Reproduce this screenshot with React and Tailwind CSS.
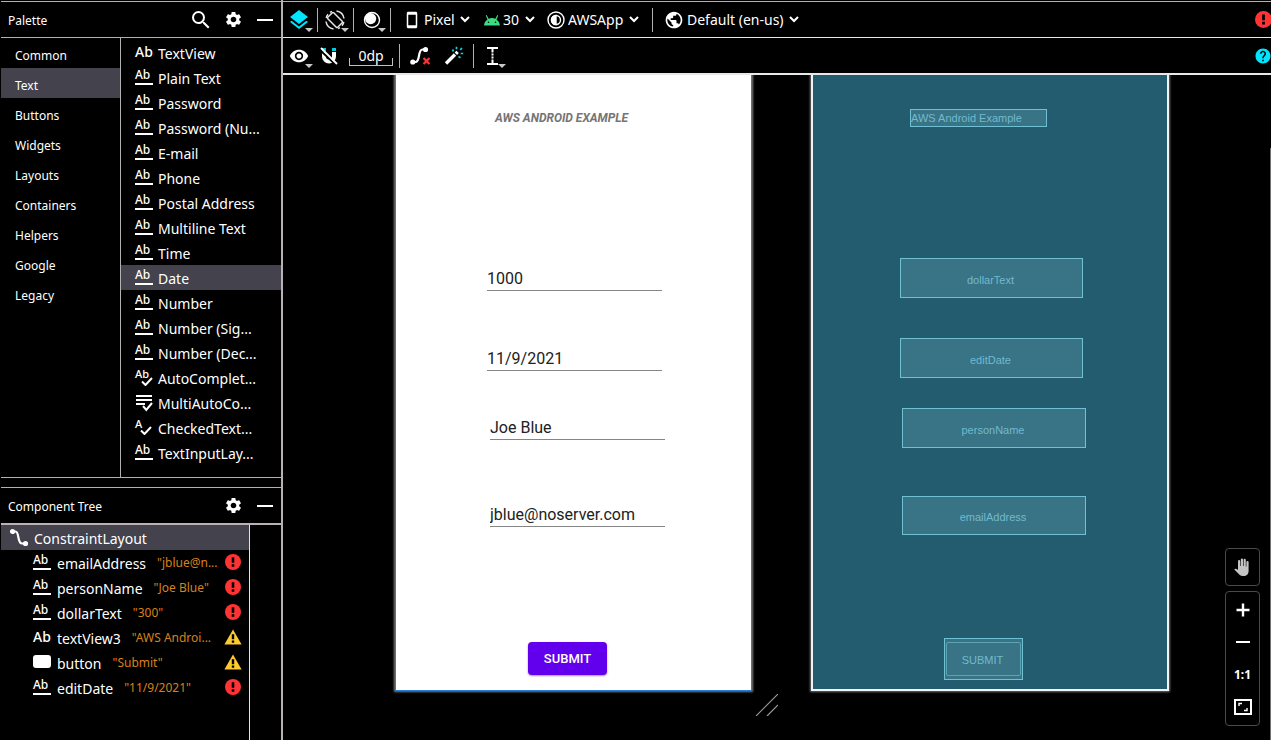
import React from "react";
import {
  MdSearch,
  MdSettings,
  MdLayers,
  MdVisibility,
  MdPublic,
  MdHelp,
  MdStayCurrentPortrait,
} from "react-icons/md";

const categories = [
  "Common",
  "Text",
  "Buttons",
  "Widgets",
  "Layouts",
  "Containers",
  "Helpers",
  "Google",
  "Legacy",
];

const widgets = [
  { name: "TextView", icon: "plain" },
  { name: "Plain Text", icon: "field" },
  { name: "Password", icon: "field" },
  { name: "Password (Nu...", icon: "field" },
  { name: "E-mail", icon: "field" },
  { name: "Phone", icon: "field" },
  { name: "Postal Address", icon: "field" },
  { name: "Multiline Text", icon: "field" },
  { name: "Time", icon: "field" },
  { name: "Date", icon: "field" },
  { name: "Number", icon: "field" },
  { name: "Number (Sig...", icon: "field" },
  { name: "Number (Dec...", icon: "field" },
  { name: "AutoComplet...", icon: "auto" },
  { name: "MultiAutoCo...", icon: "multi" },
  { name: "CheckedText...", icon: "checked" },
  { name: "TextInputLay...", icon: "field" },
];

const tree = [
  { name: "emailAddress", value: '"jblue@n...', icon: "field", level: "error" },
  { name: "personName", value: '"Joe Blue"', icon: "field", level: "error" },
  { name: "dollarText", value: '"300"', icon: "field", level: "error" },
  { name: "textView3", value: '"AWS Androi...', icon: "plain", level: "warning" },
  { name: "button", value: '"Submit"', icon: "button", level: "warning" },
  { name: "editDate", value: '"11/9/2021"', icon: "field", level: "error" },
];

function WidgetIcon({ type }) {
  if (type === "plain") {
    return <span className="flex h-5 w-[18px] items-start text-[14px] leading-[18px] font-medium">Ab</span>;
  }
  if (type === "field") {
    return (
      <span className="flex h-5 w-[18px] flex-col">
        <span className="h-[15px] text-[12px] leading-[14px] font-medium">Ab</span>
        <span className="h-0.5 w-full bg-white" />
      </span>
    );
  }
  if (type === "button") {
    return (
      <span className="flex h-5 w-[18px] items-start pt-0.5">
        <span className="h-[13px] w-full rounded-[3px] bg-white" />
      </span>
    );
  }
  if (type === "multi") {
    return (
      <svg viewBox="0 0 18 20" className="h-5 w-[18px]" fill="none" stroke="white" strokeWidth="2">
        <path d="M1 3h16M1 7h16M1 11h9M8 13l3.300 4L17 10" />
      </svg>
    );
  }
  return (
    <span className="relative flex h-5 w-[18px]">
      <span className="text-[11px] leading-3 font-medium">{type === "auto" ? "Ab" : "A"}</span>
      <svg
        viewBox="0 0 12 9"
        className={type === "auto" ? "absolute right-0 bottom-0.5 h-[9px] w-3" : "absolute right-px bottom-[3px] h-[9px] w-3"}
        fill="none"
        stroke="currentColor"
        strokeWidth="2"
      >
        <path d="M1 4.500L4.500 8 11 1" />
      </svg>
    </span>
  );
}

function ErrorIcon({ className }) {
  return (
    <svg viewBox="0 0 16 16" className={className}>
      <circle cx="8" cy="8" r="8" fill="#ff3333" />
      <path d="M6.700 3.300h2.600v5.400H6.700zM6.700 10.200h2.600v2.600H6.700z" fill="black" />
    </svg>
  );
}

function WarningIcon({ className }) {
  return (
    <svg viewBox="0 0 18 16" className={className}>
      <path d="M9 .5l8.600 15H.4z" fill="#fdcb2e" />
      <path d="M7.800 5.300h2.400v5H7.800zM7.800 11.500h2.400v2.300H7.800z" fill="black" />
    </svg>
  );
}

function Separator() {
  return <span className="h-6 w-px shrink-0 bg-[#b4b0b0]" />;
}

function IconButton({ label, caret, className = "", children }) {
  return (
    <button type="button" aria-label={label} className={`relative flex size-5 shrink-0 items-center justify-center ${className}`}>
      {children}
      {caret && (
        <svg viewBox="0 0 8 4" className="absolute -right-1 -bottom-0.5 h-1 w-2" fill="#c8c8c8">
          <path d="M0 0h8L4 4z" />
        </svg>
      )}
    </button>
  );
}

function Picker({ label, value, className = "", children }) {
  return (
    <label className={`flex shrink-0 items-center gap-[3px] ${className}`}>
      {children}
      <select aria-label={label} className="appearance-none bg-transparent p-0 text-[14px] leading-5 text-white">
        <option>{value}</option>
      </select>
      <svg viewBox="0 0 10 7" className="ml-0.5 h-[7px] w-2.5" fill="none" stroke="white" strokeWidth="2">
        <path d="M1 1l4 4 4-4" />
      </svg>
    </label>
  );
}

function PanelHeader({ title, search }) {
  return (
    <header className="flex h-[35px] items-center pr-1.5 pl-[7px]">
      <h2 className="flex-1 pt-0.5 text-[12px] leading-4">{title}</h2>
      <div className="flex items-center gap-3">
        {search && (
          <IconButton label="Search">
            <MdSearch className="size-6 shrink-0" />
          </IconButton>
        )}
        <IconButton label={`${title} settings`}>
          <MdSettings className="size-[19px] shrink-0" />
        </IconButton>
        <IconButton label={`Hide ${title}`}>
          <span className="h-0.5 w-4 bg-white" />
        </IconButton>
      </div>
    </header>
  );
}

function Sidebar() {
  return (
    <aside className="flex w-[283px] shrink-0 flex-col border-r-2 border-[#b8b2b5] pl-px">
      <section className="mt-px border-y border-[#b4b0b0]">
        <PanelHeader title="Palette" search />
        <div className="flex border-t border-[#b4b0b0]">
          <ul className="w-[120px] shrink-0 border-r border-[#b4b0b0]">
            {categories.map((name) => (
              <li key={name}>
                <button
                  type="button"
                  className={`flex h-[30px] w-full items-center pt-1.5 pl-3.5 text-[12px] leading-4 ${name === "Text" ? "bg-[#43424d]" : ""}`}
                >
                  {name}
                </button>
              </li>
            ))}
          </ul>
          <ul className="min-w-0 flex-1 pt-0.5 pb-3">
            {widgets.map((item) => (
              <li key={item.name}>
                <button
                  type="button"
                  className={`flex h-[25px] w-full items-center gap-[5px] pl-3.5 text-left text-[14px] leading-5 whitespace-nowrap ${item.name === "Date" ? "bg-[#43424d]" : ""}`}
                >
                  <WidgetIcon type={item.icon} />
                  <span className="pt-0.5">{item.name}</span>
                </button>
              </li>
            ))}
          </ul>
        </div>
      </section>

      <section className="mt-[9px] flex flex-1 flex-col border-t border-[#b4b0b0]">
        <PanelHeader title="Component Tree" />
        <div className="flex-1 border-t-2 border-[#b8b2b5] pr-[31px]">
          <ul className="h-full border-r border-[#e4e4e4]">
            <li>
              <button type="button" className="flex h-[25px] w-full items-center gap-[5px] bg-[#43424d] pl-2 text-[14px] leading-5">
                <svg viewBox="0 0 20 20" className="size-5" fill="none" stroke="white" strokeWidth="2.200">
                  <path d="M4 3.500h2.500C10.500 3.500 8 15.500 13 15.500h3" />
                  <circle cx="3.500" cy="3.500" r="1.500" fill="white" />
                  <circle cx="16.500" cy="15.500" r="1.500" fill="white" />
                </svg>
                <span className="pt-0.5">ConstraintLayout</span>
              </button>
            </li>
            {tree.map((node) => (
              <li key={node.name}>
                <button type="button" className="flex h-[25px] w-full items-center pr-[7px] pl-8 text-left whitespace-nowrap">
                  <WidgetIcon type={node.icon} />
                  <span className="pt-0.5 pl-1.5 text-[14px] leading-5">{node.name}</span>
                  <span className="flex-1 pl-[11px] text-[12px] leading-4 text-[#d6811c]">{node.value}</span>
                  <span className="flex w-[18px] shrink-0 justify-center pb-0.5">
                    {node.level === "error" ? <ErrorIcon className="size-4" /> : <WarningIcon className="h-4 w-[18px]" />}
                  </span>
                </button>
              </li>
            ))}
          </ul>
        </div>
      </section>
    </aside>
  );
}

function DeviceBar() {
  return (
    <div className="flex h-9 items-center border-t border-[#b4b0b0] pl-1.5">
      <IconButton label="Design surface" caret>
        <MdLayers className="size-6 shrink-0 text-[#00e5ff]" />
      </IconButton>
      <span className="ml-2 flex">
        <Separator />
      </span>
      <IconButton label="Orientation" caret className="ml-[7px]">
        <svg viewBox="0 0 20 20" className="size-5 shrink-0" fill="none" stroke="#e6e6e6" strokeWidth="1.500">
          <rect x="5.800" y="3" width="8.400" height="14" rx="1" transform="rotate(-45 10 10)" />
          <path d="M11.500 1a9 9 0 0 1 7.500 7.500M8.500 19A9 9 0 0 1 1 11.500" />
          <path d="M1.200 8A9 9 0 0 1 3 4.200M5 2.400a9 9 0 0 1 2-1M18.800 12a9 9 0 0 1-1.800 3.800M15 17.600a9 9 0 0 1-2 1" />
        </svg>
      </IconButton>
      <span className="ml-2 flex">
        <Separator />
      </span>
      <IconButton label="Night mode" caret className="ml-2">
        <svg viewBox="0 0 20 20" className="size-5">
          <circle cx="10" cy="10" r="7.500" fill="none" stroke="white" strokeWidth="1.400" />
          <circle cx="8.600" cy="8.600" r="5.600" fill="white" />
        </svg>
      </IconButton>
      <span className="ml-2 flex">
        <Separator />
      </span>
      <Picker label="Device" value="Pixel" className="ml-3">
        <MdStayCurrentPortrait className="size-[18px]" />
      </Picker>
      <Picker label="API version" value="30" className="ml-3.5">
        <svg viewBox="0 0 16 12" className="h-3 w-4" fill="#3ddc84">
          <path d="M0 11.500a8 8 0 0 1 3.500-6L1.800 1.600l.9-.5 1.900 3.700a9 9 0 0 1 6.800 0l1.900-3.700.9.5-1.700 3.900a8 8 0 0 1 3.500 6z" />
          <circle cx="4.500" cy="8.300" r=".8" fill="black" />
          <circle cx="11.500" cy="8.300" r=".8" fill="black" />
        </svg>
      </Picker>
      <Picker label="Theme" value="AWSApp" className="ml-3">
        <svg viewBox="0 0 18 18" className="size-[18px]" fill="none" stroke="white" strokeWidth="1.400">
          <circle cx="9" cy="9" r="8" />
          <circle cx="9" cy="9" r="4.500" />
          <path d="M9 4.500a4.500 4.500 0 0 0 0 9z" fill="white" />
        </svg>
      </Picker>
      <span className="ml-[13px] flex">
        <Separator />
      </span>
      <Picker label="Locale" value="Default (en-us)" className="ml-[11px]">
        <MdPublic className="size-5" />
      </Picker>
      <IconButton label="Show errors" className="-mr-0.5 ml-auto">
        <ErrorIcon className="size-[17px] shrink-0" />
      </IconButton>
    </div>
  );
}

function DesignBar() {
  return (
    <div className="flex h-[38px] items-center border-t border-b-2 border-[#e8e8e8] pl-1.5">
      <IconButton label="View options" caret>
        <MdVisibility className="size-5 shrink-0" />
      </IconButton>
      <IconButton label="Autoconnect" className="ml-2.5">
        <svg viewBox="0 0 20 20" className="size-5 shrink-0" fill="none" strokeWidth="4">
          <path d="M5 6v4.500a5 5 0 0 0 10 0V6" stroke="white" />
          <path d="M5 2v3M15 2v3" stroke="#00c8e0" />
          <path d="M1 4l17 16" stroke="black" strokeWidth="2" />
          <path d="M2 2l16 16" stroke="white" strokeWidth="1.800" />
        </svg>
      </IconButton>
      <button type="button" aria-label="Default margin 0dp" className="relative ml-2.5 flex h-5 w-11 items-center justify-center text-[14px] leading-5">
        0dp
        <span className="absolute inset-x-0 bottom-0 h-2 border-x border-b border-[#c0c0c0]" />
      </button>
      <span className="ml-1.5 flex">
        <Separator />
      </span>
      <IconButton label="Clear constraints" className="ml-2.5">
        <svg viewBox="0 0 20 20" className="size-5 shrink-0" fill="none" stroke="white" strokeWidth="2.200">
          <path d="M3 16h2.500c5 0 2-12.500 7-12.500h3" />
          <circle cx="2.800" cy="16" r="1.500" fill="white" />
          <circle cx="15.500" cy="3.500" r="1.500" fill="white" />
          <path d="M13.500 12l6 6M19.500 12l-6 6" stroke="#ff3333" />
        </svg>
      </IconButton>
      <IconButton label="Infer constraints" className="ml-3.5">
        <svg viewBox="0 0 20 20" className="size-5 shrink-0" fill="none">
          <path d="M2 17.500l9-9" stroke="white" strokeWidth="3.400" />
          <path d="M11.800 7.700l1.800-1.800" stroke="white" strokeWidth="3.400" />
          <path d="M8.500 3.500l1 2M12.500.8v2.500M18 2l-1.800 1.800M16.700 7.500h2.500M14.500 10.500l2 1.200" stroke="#19cbe0" strokeWidth="1.700" />
        </svg>
      </IconButton>
      <span className="ml-[9px] flex">
        <Separator />
      </span>
      <IconButton label="Guidelines" caret className="ml-2">
        <svg viewBox="0 0 20 20" className="size-5 shrink-0" fill="none" stroke="white" strokeWidth="2">
          <path d="M5 2h11M5 18h11" />
          <path d="M10.500 3v3.500M10.500 13.500V17" />
          <path d="M10.500 7.500v5" strokeDasharray="2 1" />
        </svg>
      </IconButton>
      <IconButton label="Help" className="-mr-0.5 ml-auto">
        <MdHelp className="size-[18px] shrink-0 text-[#00e5ff]" />
      </IconButton>
    </div>
  );
}

/* Widget frames are placed on the layout's free canvas, so each carries its own position. */
const fields = [
  { id: "dollarText", value: "1000", place: "left-[91px] top-[191px]" },
  { id: "editDate", value: "11/9/2021", place: "left-[91px] top-[271px]" },
  { id: "personName", value: "Joe Blue", place: "left-[94px] top-[340px]" },
  { id: "emailAddress", value: "jblue@noserver.com", place: "left-[94px] top-[427px]" },
];

const frames = [
  { id: "dollarText", place: "left-[87px] top-[183px] h-10 w-[183px]" },
  { id: "editDate", place: "left-[87px] top-[263px] h-10 w-[183px]" },
  { id: "personName", place: "left-[89px] top-[333px] h-10 w-[184px]" },
  { id: "emailAddress", place: "left-[89px] top-[421px] h-[39px] w-[184px]" },
];

function Preview() {
  return (
    <div className="relative h-[616px] w-[357px] shrink-0 border-x border-b border-[#2a7fdc] bg-white font-['Roboto',sans-serif] shadow-[0_0_2px_1px_#808080]">
      <p className="absolute top-[35px] left-[99px] text-[12px] leading-4 font-bold whitespace-nowrap text-[#757575] italic">
        AWS ANDROID EXAMPLE
      </p>
      {fields.map((field) => (
        <input
          key={field.id}
          aria-label={field.id}
          defaultValue={field.value}
          className={`absolute h-[25px] w-[175px] border-b border-[#868686] bg-transparent text-[16px] leading-6 text-[#212121] ${field.place}`}
        />
      ))}
      <button
        type="button"
        className="absolute top-[567px] left-[132px] h-[33px] w-[79px] rounded bg-[#6200ee] text-[13px] font-medium text-white shadow-[0_1px_2px_#999]"
      >
        SUBMIT
      </button>
      <svg viewBox="0 0 22 22" className="absolute -right-[27px] -bottom-[26px] size-[22px]" stroke="#9a9a9a" strokeWidth="1.200">
        <path d="M0 22L22 0M11 22l11-11" />
      </svg>
    </div>
  );
}

function Blueprint() {
  return (
    <div className="relative h-[616px] w-[358px] shrink-0 border-x-2 border-b-2 border-[#f0f4f6] bg-[#235c6e] font-['Liberation_Sans',sans-serif] text-[11px] text-[#72bacd] shadow-[0_0_2px_1px_#707070]">
      <div className="absolute top-[34px] left-[97px] flex h-[18px] w-[137px] items-center border border-[#70bfd2] bg-[#397386] whitespace-nowrap">
        AWS Android Example
      </div>
      {frames.map((frame) => (
        <div
          key={frame.id}
          className={`absolute flex items-center justify-center border border-[#70bfd2] bg-[#397386] pt-1 pr-0.5 ${frame.place}`}
        >
          {frame.id}
        </div>
      ))}
      <div className="absolute top-[563px] left-[131px] h-[42px] w-[79px] border border-[#70bfd2] bg-[#397386] px-px py-[3px]">
        <div className="flex h-full items-center justify-center rounded-xs border border-[#5da3b6] pr-0.5 pt-0.5">SUBMIT</div>
      </div>
    </div>
  );
}

function ZoomControls() {
  return (
    <div className="absolute right-[11px] bottom-3.5 flex w-[35px] flex-col gap-[5px]">
      <button type="button" aria-label="Pan" className="flex h-[38px] items-center justify-center rounded border border-[#4a4a4a]">
        <svg viewBox="0 0 17 18" className="h-[18px] w-[17px]" fill="#c4c4c4">
          <path d="M4 9.500V3.200a1 1 0 0 1 2.200 0V8h.6V1.500a1.100 1.100 0 0 1 2.200 0V8h.6V1.900a1.100 1.100 0 0 1 2.200 0V8.500h.6V4a1.100 1.100 0 0 1 2.200 0V13c0 3-2 5-5 5H8.500c-1.500 0-2.500-.5-3.500-1.700L.3 11.500c.8-1 1.800-.8 3.700.5z" />
        </svg>
      </button>
      <div className="flex h-[135px] flex-col items-center justify-between rounded border border-[#4a4a4a] py-2">
        <IconButton label="Zoom in">
          <svg viewBox="0 0 14 14" className="size-3.5" stroke="white" strokeWidth="2.400">
            <path d="M7 .5v13M.5 7h13" />
          </svg>
        </IconButton>
        <IconButton label="Zoom out">
          <span className="h-0.5 w-3.5 bg-white" />
        </IconButton>
        <button type="button" className="h-5 text-[12px] leading-5 font-bold">
          1:1
        </button>
        <IconButton label="Zoom to fit">
          <svg viewBox="0 0 18 16" className="h-4 w-[18px] shrink-0" fill="none" stroke="white">
            <rect x="1" y="1" width="16" height="14" strokeWidth="2" />
            <path d="M5 7V4.500h3M13 9v2.500h-3" strokeWidth="1.400" />
          </svg>
        </IconButton>
      </div>
    </div>
  );
}

export default function App() {
  return (
    <div className="flex min-h-screen bg-black font-['Noto_Sans','Open_Sans',sans-serif] text-white">
      <Sidebar />
      <main className="flex min-w-0 flex-1 flex-col overflow-hidden pt-px">
        <DeviceBar />
        <DesignBar />
        <div className="relative flex flex-1 justify-center gap-[59px] overflow-hidden pl-2.5">
          <Preview />
          <Blueprint />
          <ZoomControls />
          <span className="absolute top-[73px] right-0 bottom-0 w-px bg-[#707070]" />
        </div>
      </main>
    </div>
  );
}
